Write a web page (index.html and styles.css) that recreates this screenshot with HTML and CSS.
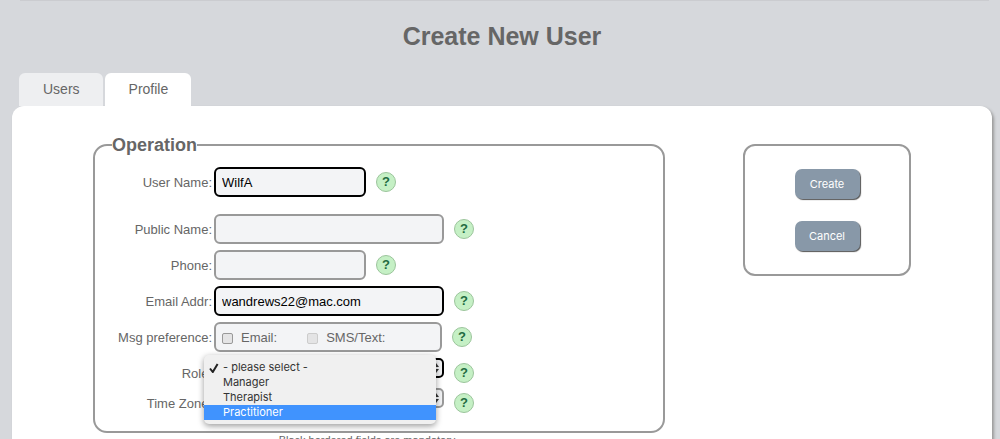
FILE: index.html
```
<!DOCTYPE html>
<html lang="en">
    <head>
        <meta charset="utf-8">
        <title>Create New User</title>
        <link rel="stylesheet" href="styles.css">
    </head>

    <body>
        <div class="topline"></div>
        <h1>Create New User</h1>

        <div class="container">
            <ul class="tabs">
                <li><a href="#users">Users</a></li>
                <li><a href="#profile" class="current">Profile</a></li>
            </ul>

            <form class="panel" action="#" method="post">
                <div class="main">
                    <fieldset class="operation">
                        <legend>Operation</legend>

                        <div class="row first">
                            <label for="username">User Name:</label>
                            <input type="text" id="username" class="short required" value="WilfA">
                            <button type="button" class="help">?</button>
                        </div>
                        <div class="row">
                            <label for="publicname">Public Name:</label>
                            <input type="text" id="publicname" class="long">
                            <button type="button" class="help">?</button>
                        </div>
                        <div class="row">
                            <label for="phone">Phone:</label>
                            <input type="text" id="phone" class="short">
                            <button type="button" class="help">?</button>
                        </div>
                        <div class="row">
                            <label for="email">Email Addr:</label>
                            <input type="text" id="email" class="long required" value="wandrews22@mac.com">
                            <button type="button" class="help">?</button>
                        </div>
                        <div class="row">
                            <span class="caption">Msg preference:</span>
                            <div class="prefs">
                                <input type="checkbox" id="by_email">
                                <label for="by_email">Email:</label>
                                <input type="checkbox" id="by_sms" disabled>
                                <label for="by_sms">SMS/Text:</label>
                            </div>
                            <button type="button" class="help">?</button>
                        </div>
                        <div class="row role">
                            <label for="role">Role:</label>
                            <div class="picker">
                                <select id="role" class="required">
                                    <option selected></option>
                                </select>
                                <svg class="arrows" viewBox="0 0 6 10"><path d="M0 4 L3 0 L6 4 Z M0 6 L3 10 L6 6 Z"/></svg>
                            </div>
                            <button type="button" class="help">?</button>
                            <!-- open list of the role drop-down -->
                            <ul class="menu" role="listbox">
                                <li role="option" aria-selected="true">
                                    <svg class="tick" viewBox="0 0 10 10"><path d="M1 5.5 L3.8 9 L8.6 1"/></svg>- please select -
                                </li>
                                <li role="option">Manager</li>
                                <li role="option">Therapist</li>
                                <li role="option" class="active">Practitioner</li>
                            </ul>
                        </div>
                        <div class="row zone">
                            <label for="timezone">Time Zone:</label>
                            <div class="picker">
                                <select id="timezone">
                                    <option selected></option>
                                </select>
                                <svg class="arrows" viewBox="0 0 6 10"><path d="M0 4 L3 0 L6 4 Z M0 6 L3 10 L6 6 Z"/></svg>
                            </div>
                            <button type="button" class="help">?</button>
                        </div>
                    </fieldset>
                    <p class="note">Black bordered fields are mandatory</p>
                </div>

                <div class="actions">
                    <button type="submit">Create</button>
                    <button type="button">Cancel</button>
                </div>
            </form>
        </div>
    </body>
</html>
```
FILE: styles.css
```
* {
	box-sizing: border-box;
}

body {
	margin: 0;
	height: 100vh;
	overflow: hidden;
	background-color: #d6d8dc;
	color: #666;
	font-family: "Liberation Sans", Arial, sans-serif;
	font-size: 13px;
}

.topline {
	height: 1px;
	margin: 0 11px 0 20px;
	background-color: #cbccd0;
}

h1 {
	margin: 20px 0 22px;
	padding-left: 4px;
	font-size: 25px;
	line-height: 30px;
	text-align: center;
}

.container {
	padding: 0 8px 0 12px;
}

.tabs {
	display: flex;
	gap: 2px;
	margin: 0;
	padding: 0 7px;
	list-style: none;
}

.tabs a {
	display: block;
	height: 33px;
	padding: 0 23px 0 24px;
	border-radius: 6px 6px 0 0;
	background-color: #eeeff1;
	color: #666;
	font-size: 14px;
	line-height: 32px;
	text-decoration: none;
}

.tabs a.current {
	background-color: #fff;
}

.panel {
	display: flex;
	align-items: flex-start;
	gap: 78px;
	padding: 28px 81px;
	border-radius: 12px;
	background-color: #fff;
	box-shadow: 2px 2px 3px #999;
}

.main {
	flex: 1;
}

.operation {
	margin: 0;
	padding: 11px 17px 13px;
	border: 2px solid #999;
	border-radius: 14px;
}

.operation legend {
	padding: 0;
	font-size: 18px;
	font-weight: bold;
	line-height: 22px;
}

.row {
	display: flex;
	align-items: center;
	position: relative;
	height: 30px;
	margin-bottom: 6px;
}

.row.first {
	margin-bottom: 17px;
}

.row.role,
.row.zone {
	margin-bottom: 0;
}

.row > label,
.caption {
	width: 100px;
	margin-right: 2px;
	text-align: right;
}

.row input[type="text"],
.prefs {
	height: 30px;
	padding: 0 6px;
	border: 2px solid #999;
	border-radius: 6px;
	background-color: #f3f4f6;
	color: #000;
	font-family: inherit;
	font-size: 13px;
}

.row input.short {
	width: 152px;
}

.row input.long {
	width: 230px;
}

.row input.required,
.picker select.required {
	border-color: #000;
}

.prefs {
	display: flex;
	align-items: center;
	width: 228px;
	color: #666;
}

.prefs input {
	appearance: none;
	width: 11px;
	height: 11px;
	margin: 2px 8px 0 0;
	border: 1px solid #999;
	border-radius: 2px;
	background-color: #e4e4e5;
}

.prefs input:disabled {
	border-color: #ccc;
}

.prefs label {
	margin-right: 30px;
}

.help {
	width: 20px;
	height: 20px;
	margin: 0 0 0 10px;
	padding: 0;
	border: 1px solid #9cc59c;
	border-radius: 10px;
	background-color: #c5f0c5;
	color: #226b40;
	font-family: inherit;
	font-size: 13px;
	font-weight: bold;
	line-height: 18px;
}

.picker {
	align-self: flex-start;
	position: relative;
	width: 230px;
	height: 20px;
}

.picker select {
	appearance: none;
	width: 100%;
	height: 20px;
	border: 2px solid #999;
	border-radius: 5px;
	background-color: #f3f4f6;
}

.arrows {
	position: absolute;
	top: 5px;
	right: 5px;
	width: 6px;
	height: 10px;
	fill: #333;
}

.menu {
	position: absolute;
	top: -3px;
	left: 92px;
	z-index: 1;
	width: 232px;
	margin: 0;
	padding: 5px 0 4px;
	border-radius: 5px;
	background-color: #f0f0f0;
	box-shadow: 0 2px 6px rgba(0, 0, 0, 0.4);
	color: #333;
	font-family: Inter, sans-serif;
	font-size: 11px;
	line-height: 15px;
	list-style: none;
}

.menu li {
	position: relative;
	padding-left: 19px;
}

.menu li.active {
	background-color: #4093fe;
	color: #fff;
}

.tick {
	position: absolute;
	top: 3px;
	left: 5px;
	width: 10px;
	height: 10px;
	fill: none;
	stroke: #222;
	stroke-width: 2;
}

.note {
	margin: 0;
	padding-right: 24px;
	font-size: 11px;
	line-height: 14px;
	text-align: center;
}

.actions {
	display: flex;
	flex-direction: column;
	align-items: center;
	gap: 22px;
	width: 168px;
	margin-top: 10px;
	padding: 23px 0;
	border: 2px solid #999;
	border-radius: 12px;
}

.actions button {
	width: 65px;
	height: 30px;
	padding: 0;
	border: 0;
	border-radius: 7px;
	background-color: #8898a8;
	box-shadow: 1px 1px 1px #555;
	color: #fff;
	font-family: Inter, sans-serif;
	font-size: 11px;
}
```
